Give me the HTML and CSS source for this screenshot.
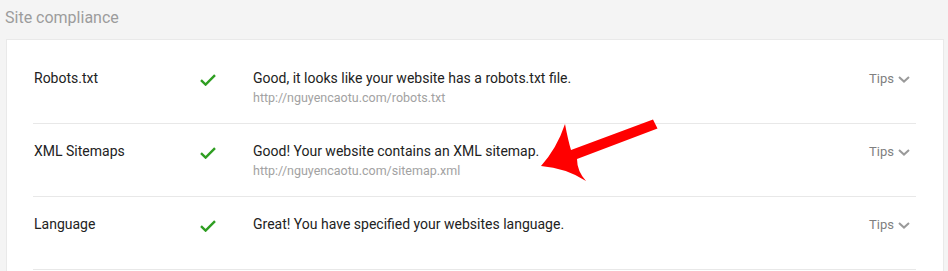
FILE: index.html
```html
<!DOCTYPE html>
<html>
<head>
<meta charset="utf-8">
<link rel="stylesheet" href="styles.css">
</head>
<body>
<div class="page">
  <h2 class="title">Site compliance</h2>
  <div class="card">
    <div class="row">
      <div class="label">Robots.txt</div>
      <div class="check"><svg width="16" height="12" viewBox="0 0 16 12"><path d="M1 6.2 L5.6 10.6 L15 1.2" fill="none" stroke="#2f9e22" stroke-width="2.4"/></svg></div>
      <div class="msg">
        <div class="main">Good, it looks like your website has a robots.txt file.</div>
        <div class="url">http://nguyencaotu.com/robots.txt</div>
      </div>
      <div class="tips">Tips <svg class="chev" width="12" height="7" viewBox="0 0 12 7"><path d="M1 1 L6 5.6 L11 1" fill="none" stroke="#9a9a9a" stroke-width="2"/></svg></div>
    </div>
    <div class="row">
      <div class="label">XML Sitemaps</div>
      <div class="check"><svg width="16" height="12" viewBox="0 0 16 12"><path d="M1 6.2 L5.6 10.6 L15 1.2" fill="none" stroke="#2f9e22" stroke-width="2.4"/></svg></div>
      <div class="msg">
        <div class="main">Good! Your website contains an XML sitemap.</div>
        <div class="url">http://nguyencaotu.com/sitemap.xml</div>
      </div>
      <div class="tips">Tips <svg class="chev" width="12" height="7" viewBox="0 0 12 7"><path d="M1 1 L6 5.6 L11 1" fill="none" stroke="#9a9a9a" stroke-width="2"/></svg></div>
    </div>
    <div class="row">
      <div class="label">Language</div>
      <div class="check"><svg width="16" height="12" viewBox="0 0 16 12"><path d="M1 6.2 L5.6 10.6 L15 1.2" fill="none" stroke="#2f9e22" stroke-width="2.4"/></svg></div>
      <div class="msg">
        <div class="main">Great! You have specified your websites language.</div>
      </div>
      <div class="tips">Tips <svg class="chev" width="12" height="7" viewBox="0 0 12 7"><path d="M1 1 L6 5.6 L11 1" fill="none" stroke="#9a9a9a" stroke-width="2"/></svg></div>
    </div>
  </div>
  <svg class="arrow" width="948" height="271" viewBox="0 0 948 271">
    <path d="M653 119.5 L657.5 128.5 L577 159 Q577 171 586 181 Q566 168 541 166 Q557 148 565 124 Q568 140 571 150 Z" fill="#ff0000"/>
  </svg>
</div>
</body>
</html>
```

FILE: styles.css
```css
html, body {
  margin: 0;
  padding: 0;
  background: #f4f4f4;
}
body {
  font-family: Roboto, "Liberation Sans", Arial, sans-serif;
  width: 948px;
  height: 271px;
  overflow: hidden;
}
.page {
  position: relative;
  height: 271px;
}
.title {
  margin: 0;
  padding: 8px 0 0 5px;
  height: 31px;
  font-size: 16px;
  line-height: 20px;
  font-weight: 400;
  color: #9c9c9c;
}
.card {
  box-sizing: border-box;
  margin: 0 4px 0 6px;
  background: #fff;
  border: 1px solid #e9e9e9;
  border-bottom: none;
  padding: 11px 27px 0 26px;
  height: 232px;
}
.row {
  display: grid;
  grid-template-columns: 167px 53px 1fr auto;
  align-items: start;
  height: 54px;
  padding-top: 18px;
  border-bottom: 1px solid #e8e8e8;
}
.label {
  font-size: 14px;
  line-height: 19px;
  color: #222;
  padding-left: 1px;
}
.check {
  height: 19px;
  display: flex;
  align-items: center;
  padding-top: 1px;
}
.check svg {
  display: block;
}
.msg .main {
  font-size: 14px;
  line-height: 19px;
  color: #222;
}
.msg .url {
  font-size: 12.5px;
  line-height: 19px;
  color: #a2a2a2;
}
.tips {
  font-size: 13px;
  line-height: 19px;
  color: #808080;
  display: flex;
  align-items: center;
  gap: 4px;
  padding-right: 6px;
}
.chev {
  display: block;
  margin-top: 2px;
}
.arrow {
  position: absolute;
  left: 0;
  top: 0;
  pointer-events: none;
}
```
